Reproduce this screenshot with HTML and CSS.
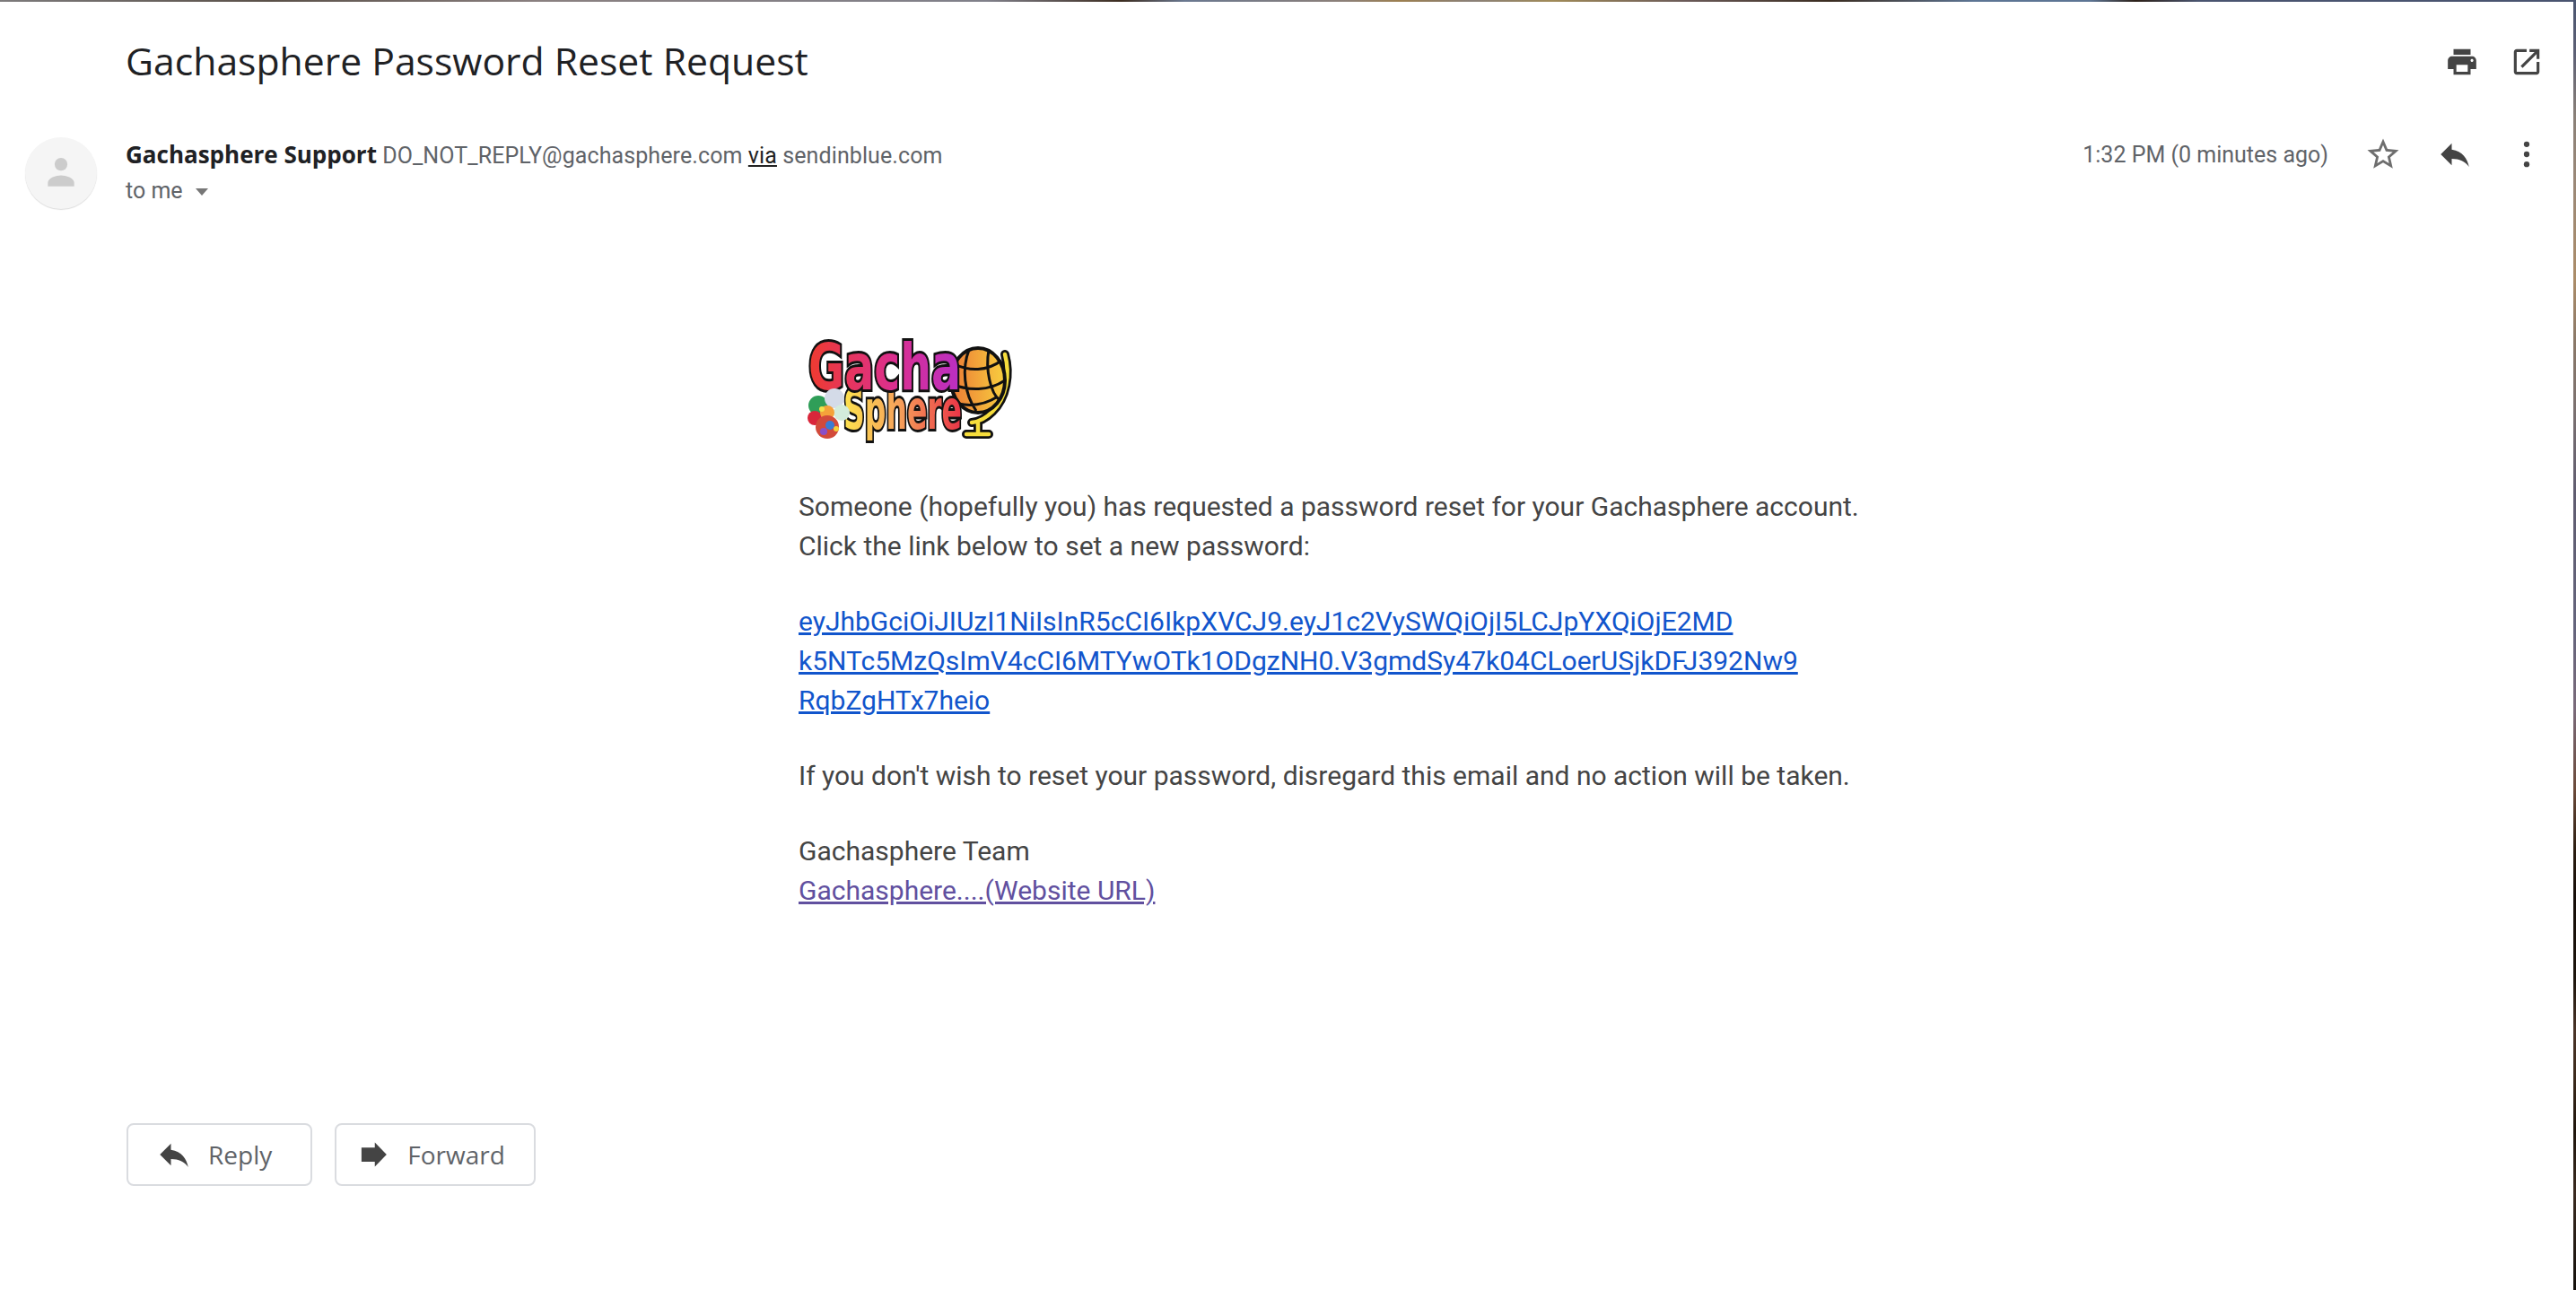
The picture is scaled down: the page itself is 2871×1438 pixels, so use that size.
FILE: index.html
```html
<!DOCTYPE html>
<html lang="en">
<head>
  <meta charset="UTF-8" />
  <title>Gachasphere Password Reset Request</title>
  <link rel="stylesheet" href="styles.css">
</head>
<body>
  <div class="top-strip"></div>

  <div class="mail">
    <header class="subject-row">
      <h1 class="subject">Gachasphere Password Reset Request</h1>
      <div class="subject-actions">
        <svg class="icon" viewBox="0 0 24 24"><path d="M19 8H5c-1.66 0-3 1.34-3 3v6h4v4h12v-4h4v-6c0-1.66-1.34-3-3-3zm-3 11H8v-5h8v5zm3-7c-.55 0-1-.45-1-1s.45-1 1-1 1 .45 1 1-.45 1-1 1zm-1-9H6v4h12V3z"/></svg>
        <svg class="icon" viewBox="0 0 24 24"><path d="M19 19H5V5h7V3H5c-1.11 0-2 .9-2 2v14c0 1.1.89 2 2 2h14c1.1 0 2-.9 2-2v-7h-2v7zM14 3v2h3.59l-9.83 9.83 1.41 1.41L19 6.41V10h2V3h-7z"/></svg>
      </div>
    </header>

    <div class="sender-row">
      <div class="avatar">
        <svg viewBox="0 0 24 24"><circle cx="12" cy="6.6" r="3.9"/><path d="M12 13.4c-3 0-8 1.5-8 4.5V20h16v-2.1c0-3-5-4.5-8-4.5z"/></svg>
      </div>
      <div class="sender-info">
        <div class="sender-line">
          <span class="sender-name">Gachasphere Support</span>
          <span class="sender-mail">DO_NOT_REPLY@gachasphere.com <u>via</u> sendinblue.com</span>
        </div>
        <div class="to-line">to me <span class="caret"></span></div>
      </div>
      <div class="sender-meta">
        <span class="mail-time">1:32 PM (0 minutes ago)</span>
        <svg class="icon-lg star" viewBox="0 0 24 24"><path d="M22 9.24l-7.19-.62L12 2 9.19 8.63 2 9.24l5.46 4.73L5.82 21 12 17.27 18.18 21l-1.63-7.03L22 9.24zM12 15.4l-3.76 2.27 1-4.28-3.32-2.88 4.38-.38L12 6.1l1.71 4.04 4.38.38-3.32 2.88 1 4.28L12 15.4z"/></svg>
        <svg class="icon-lg" viewBox="0 0 24 24"><path d="M10 9V5l-7 7 7 7v-4.1c5 0 8.5 1.6 11 5.1-1-5-4-10-11-11z"/></svg>
        <svg class="icon-lg" viewBox="0 0 24 24"><circle cx="12" cy="5.6" r="1.8"/><circle cx="12" cy="12" r="1.8"/><circle cx="12" cy="18.4" r="1.8"/></svg>
      </div>
    </div>

    <main class="mail-body">
      <svg class="logo" viewBox="0 0 240 130">
        <defs>
          <linearGradient id="gachaFill" x1="0" x2="1" y1="0" y2="0">
            <stop offset="0" stop-color="#ee3b2f"/>
            <stop offset="0.55" stop-color="#dc2f8e"/>
            <stop offset="1" stop-color="#b92fc4"/>
          </linearGradient>
          <linearGradient id="sphereFill" x1="0" x2="1" y1="0" y2="0">
            <stop offset="0" stop-color="#fde24e"/>
            <stop offset="0.45" stop-color="#f6a45a"/>
            <stop offset="1" stop-color="#ea3347"/>
          </linearGradient>
          <linearGradient id="globeFill" x1="0" x2="1" y1="0" y2="0">
            <stop offset="0" stop-color="#ec7a35"/>
            <stop offset="1" stop-color="#f8cf3f"/>
          </linearGradient>
        </defs>
        <path d="M232 27c6 22 2 48-14 64-6 6-14 11-23 12M202 104v12M189 116h25" fill="none" stroke="#111" stroke-width="10" stroke-linecap="round"/>
        <path d="M232 27c6 22 2 48-14 64-6 6-14 11-23 12M202 104v12M189 116h25" fill="none" stroke="#f6dd3c" stroke-width="4.5" stroke-linecap="round"/>
        <ellipse cx="202" cy="56" rx="30" ry="36" fill="url(#globeFill)" stroke="#111" stroke-width="4"/>
        <path d="M176 38c16 8 36 8 52-4M172 60c20 8 42 8 60-4M180 82c14 3 30 1 44-8M192 22c-8 20-6 48 8 68M214 22c-4 22 2 48 12 56" fill="none" stroke="#111" stroke-width="3"/>
        <text class="logo-sphere" x="52" y="110" textLength="132" lengthAdjust="spacingAndGlyphs">Sphere</text>
        <text class="logo-gacha" x="13" y="66" textLength="170" lengthAdjust="spacingAndGlyphs">Gacha</text>
        <g>
          <circle cx="24" cy="84" r="11" fill="#2f9e58"/>
          <circle cx="42" cy="76" r="11" fill="#d4dbe8"/>
          <circle cx="50" cy="92" r="9" fill="#d3ecdc"/>
          <circle cx="20" cy="98" r="8" fill="#d9263a"/>
          <circle cx="34" cy="92" r="8" fill="#f5a23a"/>
          <circle cx="34" cy="108" r="13" fill="#d24a3a"/>
          <circle cx="37" cy="106" r="5" fill="#3a7bd5"/>
          <circle cx="30" cy="113" r="4" fill="#8a4fc8"/>
          <circle cx="44" cy="110" r="3" fill="#f5cf3a"/>
          <circle cx="28" cy="88" r="3" fill="#f5e04a"/>
        </g>
      </svg>

      <p>Someone (hopefully you) has requested a password reset for your Gachasphere account.<br>Click the link below to set a new password:</p>
      <p><a class="reset-link" href="#">eyJhbGciOiJIUzI1NiIsInR5cCI6IkpXVCJ9.eyJ1c2VySWQiOjI5LCJpYXQiOjE2MD<br>k5NTc5MzQsImV4cCI6MTYwOTk1ODgzNH0.V3gmdSy47k04CLoerUSjkDFJ392Nw9<br>RqbZgHTx7heio</a></p>
      <p>If you don't wish to reset your password, disregard this email and no action will be taken.</p>
      <p>Gachasphere Team<br><a class="site-link" href="#">Gachasphere....(Website URL)</a></p>
    </main>

    <div class="reply-row">
      <a class="reply-button reply" href="#">
        <svg class="icon-lg" viewBox="0 0 24 24"><path d="M10 9V5l-7 7 7 7v-4.1c5 0 8.5 1.6 11 5.1-1-5-4-10-11-11z"/></svg>
        Reply
      </a>
      <a class="reply-button forward" href="#">
        <svg class="icon-lg" viewBox="0 0 24 24"><path d="M13 4.3l7.5 7.7-7.5 7.7v-3.2H4.5v-9H13z"/></svg>
        Forward
      </a>
    </div>
  </div>

  <div class="right-strip"></div>
</body>
</html>
```

FILE: styles.css
```css
html, body {
  margin: 0;
  height: 100%;
  overflow: hidden;
}
body {
  background: #fff;
  font-family: Roboto, Arial, sans-serif;
  color: #222;
}
.top-strip {
  height: 2px;
  background: linear-gradient(90deg, #7d7b7c 0, #5a5048 300px, #8a8080 600px, #80808a 1100px, #3c2c20 1250px, #6a7890 1320px, #8d8078 1500px, #9c7f50 1560px, #8a8078 1640px, #a08a58 1730px, #6a5a58 1880px, #3a2c20 2040px, #5d7594 2200px, #5d7594 2330px, #2c2018 2380px, #4a5570 2450px, #4a5570 100%);
}
.right-strip {
  position: absolute;
  top: 0;
  right: 0;
  bottom: 0;
  width: 3px;
  background: linear-gradient(180deg, #4a5570 0, #5d6075 60px, #8a8078 130px, #9a8878 200px, #ab8c68 312px, #8a7868 380px, #7a7070 460px, #5f5c70 550px, #64647c 700px, #7a6a7a 790px, #6b4a3a 880px, #2a1c10 950px, #150d08 1000px, #1c140c 1090px, #4a3428 1150px, #3c2a1c 1200px, #1f150c 1260px, #3a2a20 1330px, #14100c 100%);
}

.mail {
  display: flex;
  flex-direction: column;
}

.subject-row {
  display: flex;
  align-items: center;
  justify-content: space-between;
  height: 130px;
  padding: 0 36px 0 140px;
  box-sizing: border-box;
}
.subject {
  margin: 0;
  font-family: "Open Sans", Roboto, sans-serif;
  font-size: 42.7px;
  font-weight: 400;
  color: #202124;
}
.subject-actions {
  display: flex;
  gap: 34px;
  margin-top: 4px;
}

.icon {
  width: 38px;
  height: 38px;
  fill: #444;
  flex: none;
}
.icon-lg {
  width: 42px;
  height: 42px;
  fill: #444;
  flex: none;
}
.star { fill: #6e6e6e; }

.sender-row {
  display: flex;
  align-items: flex-start;
  margin-top: 21px;
  padding: 0 34px 0 28px;
}
.avatar {
  width: 80px;
  height: 80px;
  border-radius: 50%;
  background: #f5f5f5;
  box-shadow: 0 1px 1px #ddd;
  display: flex;
  align-items: center;
  justify-content: center;
  flex: none;
}
.avatar svg {
  width: 44px;
  height: 44px;
  fill: #ccc;
}
.sender-info {
  margin-left: 32px;
  padding-top: 1px;
  flex: 1;
}
.sender-line {
  font-size: 25px;
  line-height: 36px;
}
.sender-name {
  font-family: "Open Sans", sans-serif;
  font-weight: 700;
  font-size: 26px;
  color: #202124;
}
.sender-mail {
  font-size: 25px;
  letter-spacing: 0.1px;
  color: #5f6368;
}
.sender-mail u { color: #222; }
.to-line {
  font-size: 25px;
  line-height: 36px;
  margin-top: 3px;
  color: #5f6368;
}
.caret {
  display: inline-block;
  margin-left: 8px;
  vertical-align: middle;
  border-left: 7px solid transparent;
  border-right: 7px solid transparent;
  border-top: 8px solid #777;
}
.sender-meta {
  display: flex;
  align-items: center;
  gap: 38px;
  margin-top: -2px;
}
.mail-time {
  font-size: 25px;
  color: #5f6368;
  margin-right: 2px;
}

.mail-body {
  margin: 135px 0 0 890px;
  width: 1200px;
  font-size: 30px;
  line-height: 44px;
  color: #444;
}
.mail-body p {
  margin: 0 0 40px;
}
.logo {
  display: block;
  width: 240px;
  height: 130px;
  margin: 0 0 45px -2px;
  overflow: visible;
  filter: blur(0.6px);
}
.logo-gacha, .logo-sphere {
  font-family: "DejaVu Sans", sans-serif;
  font-weight: 700;
  stroke: #111;
  stroke-width: 6px;
  paint-order: stroke;
}
.logo-gacha {
  font-size: 72px;
  fill: url(#gachaFill);
}
.logo-sphere {
  font-size: 60px;
  fill: url(#sphereFill);
}
.reset-link { color: #1155cc; }
.site-link { color: #61509f; }

.reply-row {
  display: flex;
  gap: 25px;
  margin: 197px 0 0 141px;
}
.reply-button {
  display: flex;
  align-items: center;
  gap: 17px;
  height: 70px;
  box-sizing: border-box;
  border: 2px solid #dadce0;
  border-radius: 8px;
  font-family: "Open Sans", sans-serif;
  font-size: 28px;
  color: #5f6368;
  text-decoration: none;
}
.reply { padding: 0 43px 0 30px; }
.forward { padding: 0 32px 0 20px; }
```
